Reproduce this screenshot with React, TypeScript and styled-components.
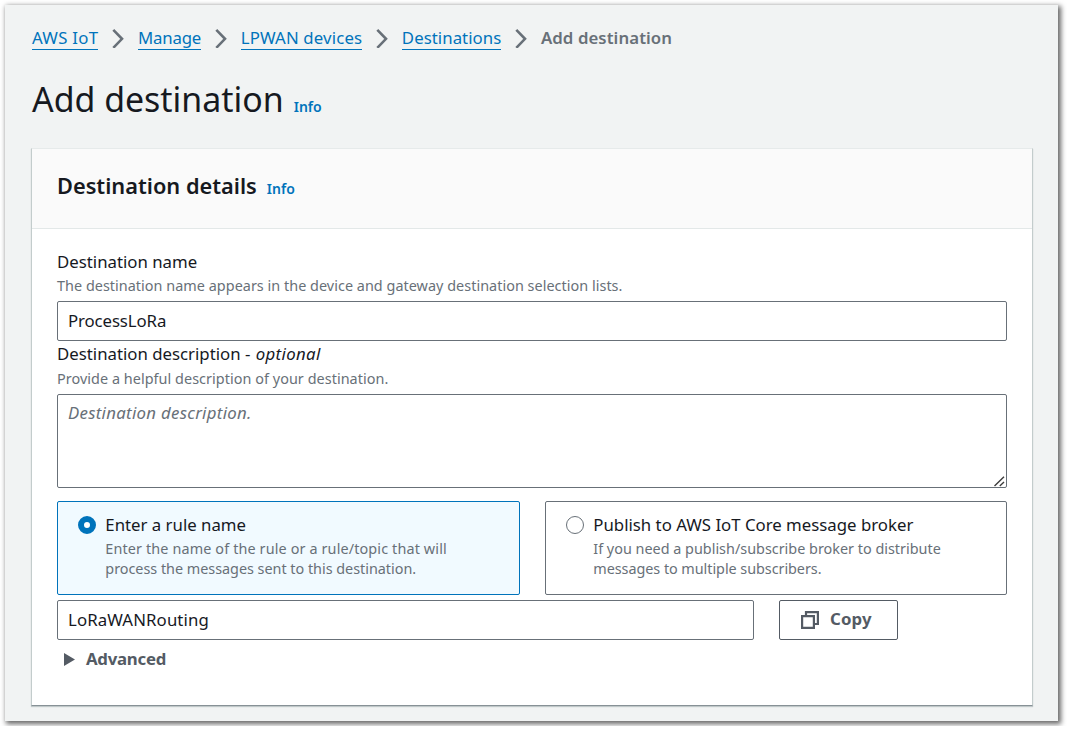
import React from 'react';
import styled, { createGlobalStyle } from 'styled-components';

const GlobalStyle = createGlobalStyle`
  *, *::before, *::after { box-sizing: border-box; }
  html, body { margin: 0; background: #fff; }
  body {
    font-family: "Noto Sans", "Open Sans", sans-serif;
    font-size: 16.8px;
    color: #16191f;
    overflow: hidden;
  }
`;

const Page = styled.main`
  width: 1053px;
  height: 716px;
  margin: 5px;
  padding: 21px 25px 0 26px;
  background: #f1f3f3;
  box-shadow: 2px 2px 5px 1px rgba(0, 0, 0, 0.6);
`;

const Breadcrumbs = styled.nav`
  display: flex;
  align-items: center;
  gap: 13.8px;
  height: 24px;
  padding-left: 1px;
  white-space: nowrap;
`;

const Crumb = styled.a<{ $track?: number }>`
  height: 23px;
  line-height: 22px;
  color: #0073bb;
  text-decoration: none;
  border-bottom: 1px solid #0073bb;
  letter-spacing: ${(p) => p.$track ?? 0}px;
`;

const CurrentCrumb = styled.span`
  line-height: 24px;
  font-weight: 600;
  color: #687078;
  letter-spacing: 0.08px;
`;

const Chevron = styled.svg`
  width: 12px;
  height: 20px;
  flex: none;
  fill: none;
  stroke: #687078;
  stroke-width: 2.6;
`;

const PageHeading = styled.header`
  display: flex;
  align-items: baseline;
  gap: 10px;
  height: 48px;
  margin: 25px 0 25px;
  padding-left: 1px;
`;

const Title = styled.h1`
  margin: 0;
  font-size: 33.9px;
  font-weight: 400;
  line-height: 49px;
  white-space: nowrap;
`;

const InfoLink = styled.a`
  font-size: 14px;
  font-weight: 600;
  color: #0073bb;
`;

const Panel = styled.section`
  height: 558px;
  background: #fff;
  border: 1px solid #c3cccc;
  border-top-color: #e6eaea;
  border-bottom-color: #879196;
  box-shadow: 0 1px 1px rgba(0, 28, 36, 0.2);
`;

const PanelHeader = styled.header`
  display: flex;
  align-items: baseline;
  gap: 10px;
  height: 80px;
  padding: 22px 25px 0;
  background: #fafafa;
  border-bottom: 1px solid #e3e8e8;
`;

const PanelTitle = styled.h2`
  margin: 0;
  font-size: 21.75px;
  font-weight: 600;
  line-height: 30px;
`;

const PanelBody = styled.div`
  display: flex;
  flex-direction: column;
  padding: 21px 25px;
`;

const Label = styled.label`
  line-height: 24px;
  white-space: nowrap;
`;

const Optional = styled.i`
  letter-spacing: 0.35px;
  margin-left: 1px;
`;

const Hint = styled.p<{ $top?: number; $track?: number }>`
  margin: ${(p) => p.$top ?? 2}px 0 0;
  font-size: 14.4px;
  line-height: 20px;
  color: #687078;
  white-space: nowrap;
  letter-spacing: ${(p) => p.$track ?? 0}px;
`;

const HintLine = styled.span<{ $track?: number }>`
  display: block;
  letter-spacing: ${(p) => p.$track ?? 0}px;
`;

const Field = styled.div`
  display: flex;
  flex-direction: column;
  position: relative;
`;

const Input = styled.input<{ $track?: number }>`
  width: 100%;
  height: 40px;
  padding: 0 10px 2px;
  font: inherit;
  letter-spacing: ${(p) => p.$track ?? 0}px;
  color: #16191f;
  background: #fff;
  border: 1px solid #687078;
  border-radius: 2px;
  outline: none;
`;

const NameInput = styled(Input)`
  margin: 5px 0 1px;
`;

const TextArea = styled.textarea`
  display: block;
  width: 100%;
  height: 94px;
  margin-top: 5px;
  padding: 6px 10px;
  font: inherit;
  line-height: 24px;
  letter-spacing: 0.3px;
  border: 1px solid #687078;
  border-radius: 2px;
  outline: none;
  resize: none;
  &::placeholder { color: #687078; font-style: italic; opacity: 1; }
`;

const Grip = styled.svg`
  position: absolute;
  right: 2px;
  bottom: 1px;
  width: 11px;
  height: 11px;
  stroke: #3c3c3c;
  stroke-width: 1.4;
`;

const Tiles = styled.div`
  display: grid;
  grid-template-columns: 463px 462px;
  gap: 25px;
  margin-top: 13px;
`;

const Tile = styled.label<{ $selected?: boolean }>`
  display: flex;
  gap: 9.3px;
  height: 94px;
  padding: 11px 20px;
  background: ${(p) => (p.$selected ? '#f1faff' : '#fff')};
  border: 1px solid ${(p) => (p.$selected ? '#0073bb' : '#687078')};
  border-radius: 2px;
`;

const Radio = styled.span<{ $selected?: boolean }>`
  flex: none;
  width: 18px;
  height: 18px;
  margin-top: 3.4px;
  border-radius: 50%;
  background: #fff;
  border: ${(p) => (p.$selected ? '6px solid #0073bb' : '1px solid #687078')};
`;

const TileText = styled.div`
  line-height: 24px;
  white-space: nowrap;
`;

const RuleRow = styled.div`
  display: grid;
  grid-template-columns: 697px 119px;
  gap: 25px;
  margin-top: 5px;
`;

const CopyButton = styled.button`
  display: flex;
  align-items: center;
  gap: 11px;
  height: 40px;
  padding: 0 0 0 21px;
  font: inherit;
  line-height: 24px;
  font-weight: 700;
  letter-spacing: 0.15px;
  color: #545b64;
  background: #fff;
  border: 1px solid #545b64;
  border-radius: 2px;
`;

const ButtonLabel = styled.span`
  padding-bottom: 2px;
`;

const Expander = styled.div`
  display: flex;
  align-items: center;
  gap: 11px;
  height: 24px;
  margin-top: 6px;
  padding-left: 7px;
  font-weight: 700;
  letter-spacing: -0.25px;
  color: #545b64;
`;

const Arrow = styled.svg`
  width: 11px;
  height: 13px;
  margin-top: 2px;
  fill: #545b64;
`;

const Separator = () => (
  <Chevron viewBox="0 0 12 20" aria-hidden="true">
    <path d="M1.3 1.8 L10 10.8 L1.3 19.8" />
  </Chevron>
);

export default function App() {
  return (
    <>
      <GlobalStyle />
      <Page>
        <Breadcrumbs>
          <Crumb $track={0.28}>AWS IoT</Crumb>
          <Separator />
          <Crumb $track={-0.18}>Manage</Crumb>
          <Separator />
          <Crumb $track={0.15}>LPWAN devices</Crumb>
          <Separator />
          <Crumb $track={0.05}>Destinations</Crumb>
          <Separator />
          <CurrentCrumb>Add destination</CurrentCrumb>
        </Breadcrumbs>
        <PageHeading>
          <Title>Add destination</Title>
          <InfoLink>Info</InfoLink>
        </PageHeading>
        <Panel>
          <PanelHeader>
            <PanelTitle>Destination details</PanelTitle>
            <InfoLink>Info</InfoLink>
          </PanelHeader>
          <PanelBody>
            <Field>
              <Label>Destination name</Label>
              <Hint $track={0.035}>
                The destination name appears in the device and gateway destination selection lists.
              </Hint>
              <NameInput defaultValue="ProcessLoRa" $track={-0.1} />
            </Field>
            <Field>
              <Label>
                Destination description - <Optional>optional</Optional>
              </Label>
              <Hint $top={3} $track={0.05}>
                Provide a helpful description of your destination.
              </Hint>
              <TextArea placeholder="Destination description." />
              <Grip viewBox="0 0 11 11" aria-hidden="true">
                <path d="M0.5 10 L10 0.8 M5.8 10 L10 6" />
              </Grip>
            </Field>
            <Tiles>
              <Tile $selected>
                <Radio $selected />
                <TileText>
                  Enter a rule name
                  <Hint>
                    <HintLine $track={0.13}>Enter the name of the rule or a rule/topic that will</HintLine>
                    <HintLine $track={-0.02}>process the messages sent to this destination.</HintLine>
                  </Hint>
                </TileText>
              </Tile>
              <Tile>
                <Radio />
                <TileText>
                  Publish to AWS IoT Core message broker
                  <Hint>
                    <HintLine>If you need a publish/subscribe broker to distribute</HintLine>
                    <HintLine $track={-0.05}>messages to multiple subscribers.</HintLine>
                  </Hint>
                </TileText>
              </Tile>
            </Tiles>
            <RuleRow>
              <Input defaultValue="LoRaWANRouting" $track={0.12} />
              <CopyButton>
                <svg width="18" height="18" viewBox="0 0 18 18" fill="none" stroke="#545b64" strokeWidth="2.2">
                  <path d="M1.1 5.1 H12.9 V16.9 H1.1 Z M5 5 V1.1 H16.9 V13 H13" />
                </svg>
                <ButtonLabel>Copy</ButtonLabel>
              </CopyButton>
            </RuleRow>
            <Expander>
              <Arrow viewBox="0 0 11 13">
                <path d="M0 0 L11 6.5 L0 13 Z" />
              </Arrow>
              Advanced
            </Expander>
          </PanelBody>
        </Panel>
      </Page>
    </>
  );
}
